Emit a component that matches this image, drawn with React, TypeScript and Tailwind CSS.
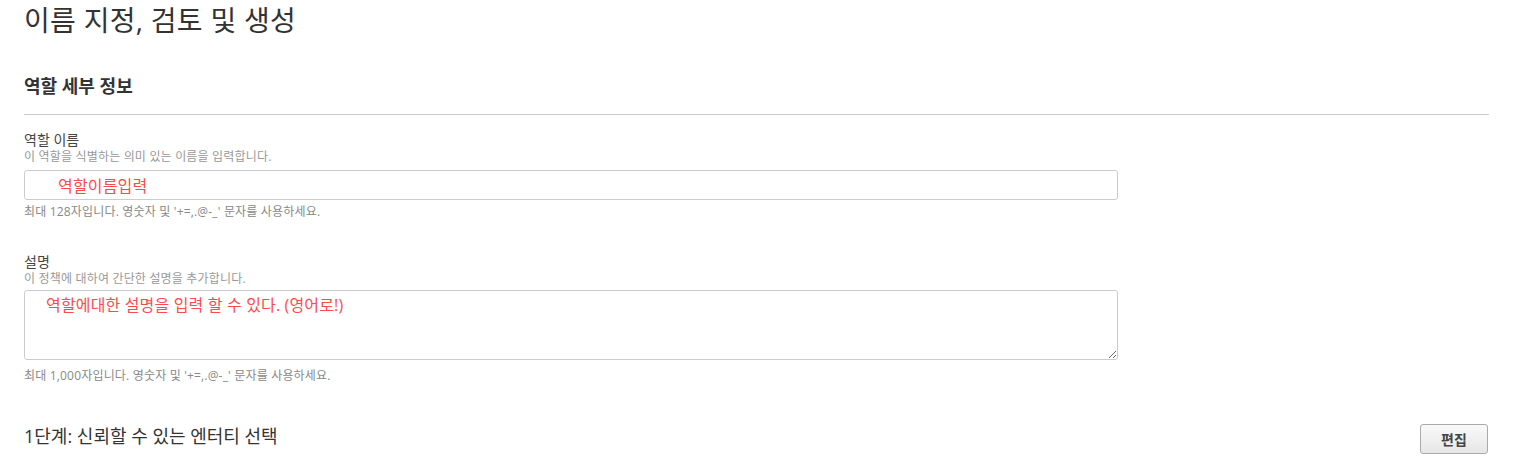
import React from "react";

const font = "font-['Open_Sans','Noto_Sans_CJK_KR',sans-serif]";

export default function App() {
  return (
    <div className={`min-h-[465px] bg-white text-[#444] ${font}`}>
      <div className="pl-[24px] pr-[24px]">
        {/* Page title */}
        <h1 className="pt-[2px] text-[28px] leading-[36px] font-normal tracking-[0.01em] text-[#333]">
          이름 지정, 검토 및 생성
        </h1>

        {/* Section header */}
        <h2 className="mt-[35px] text-[18px] leading-[26px] font-bold text-[#333]">
          역할 세부 정보
        </h2>
        <div className="mt-[15px] border-t border-[#ccc]" />

        {/* Role name */}
        <div className="mt-[16px] w-[1094px]">
          <label className="block text-[14px] leading-[18px] text-[#444]">
            역할 이름
          </label>
          <p className="text-[12px] leading-[16px] tracking-[0.015em] text-[#999]">
            이 역할을 식별하는 의미 있는 이름을 입력합니다.
          </p>
          <input
            readOnly
            defaultValue="역할이름입력"
            className="mt-[5px] block w-full h-[30px] rounded-[3px] border border-[#ccc] pl-[33px] text-[16px] tracking-[0.01em] text-[#ff4a4a] outline-none"
          />
          <p className="mt-[4px] text-[12px] leading-[16px] tracking-[0.015em] text-[#888]">
            최대 128자입니다. 영숫자 및 '+=,.@-_' 문자를 사용하세요.
          </p>
        </div>

        {/* Description */}
        <div className="mt-[33px] w-[1094px]">
          <label className="block text-[14px] leading-[18px] text-[#444]">
            설명
          </label>
          <p className="text-[12px] leading-[16px] tracking-[0.015em] text-[#999]">
            이 정책에 대하여 간단한 설명을 추가합니다.
          </p>
          <textarea
            readOnly
            defaultValue="역할에대한 설명을 입력 할 수 있다. (영어로!)"
            className="mt-[3px] block w-full h-[70px] rounded-[3px] border border-[#ccc] pl-[21px] pt-[3px] text-[16px] leading-[22px] tracking-[0.01em] text-[#ff4a4a] outline-none"
          />
          <p className="mt-[8px] text-[12px] leading-[16px] tracking-[0.015em] text-[#888]">
            최대 1,000자입니다. 영숫자 및 '+=,.@-_' 문자를 사용하세요.
          </p>
        </div>

        {/* Step 1 */}
        <div className="mt-[40px] flex items-start justify-between">
          <h3 className="mt-[-1px] text-[18px] leading-[26px] font-normal text-[#333]">
            1단계: 신뢰할 수 있는 엔터티 선택
          </h3>
          <button className="h-[30px] w-[68px] mr-[1px] rounded-[3px] border border-[#aaa] bg-gradient-to-b from-[#fafafa] to-[#e6e6e6] text-[14px] font-bold text-[#444]">
            편집
          </button>
        </div>
      </div>
    </div>
  );
}
